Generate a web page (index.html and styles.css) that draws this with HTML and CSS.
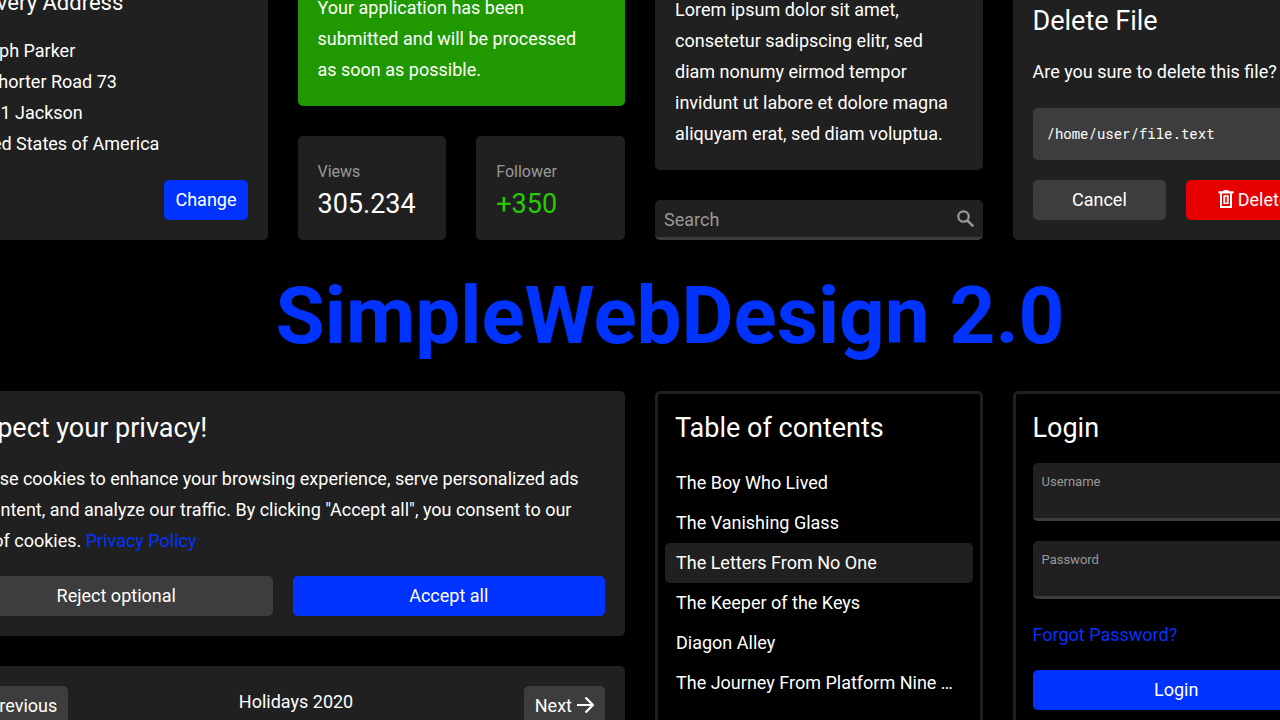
FILE: index.html
```html
<!DOCTYPE html>
<html lang="en">
<head>
<meta charset="utf-8">
<meta name="viewport" content="width=device-width, initial-scale=1">
<title>SimpleWebDesign 2.0</title>
<link rel="stylesheet" href="styles.css">
</head>
<body>
<main class="showcase">
  <div class="board board-top">
    <section class="card">
      <h3 class="subheading">Delivery Address</h3>
      <address class="text">Joseph Parker<br>No Shorter Road 73<br>39201 Jackson<br>United States of America</address>
      <div class="actions-end"><button class="button primary" type="button">Change</button></div>
    </section>

    <div class="stack">
      <section class="card success">
        <p class="text">Your application has been<br>submitted and will be processed<br>as soon as possible.</p>
      </section>
      <div class="stats">
        <section class="card">
          <div class="stat-label">Views</div>
          <div class="stat-value">305.234</div>
        </section>
        <section class="card">
          <div class="stat-label">Follower</div>
          <div class="stat-value gain">+350</div>
        </section>
      </div>
    </div>

    <div class="stack">
      <section class="card">
        <p class="text">Lorem ipsum dolor sit amet, consetetur sadipscing elitr, sed diam nonumy eirmod tempor invidunt ut labore et dolore magna aliquyam erat, sed diam voluptua.</p>
      </section>
      <div class="search">
        <input class="search-input" type="search" placeholder="Search" aria-label="Search">
        <svg class="search-icon" viewBox="0 0 18 18" aria-hidden="true"><circle cx="6.5" cy="6.5" r="5.200" fill="none" stroke="currentColor" stroke-width="2.200"/><path d="M10.300 10.300 16.300 16.300" fill="none" stroke="currentColor" stroke-width="2.600"/></svg>
      </div>
    </div>

    <section class="card">
      <h2 class="heading">Delete File</h2>
      <p class="text">Are you sure to delete this file?</p>
      <code class="path">/home/user/file.text</code>
      <div class="actions">
        <button class="button" type="button">Cancel</button>
        <button class="button danger" type="button"><svg class="trash" viewBox="0 0 16 18" aria-hidden="true"><path fill="currentColor" fill-rule="evenodd" d="M5.500 0h5v1.300h5v2.200H14V18H2V3.500H.5V1.300h5zM4 3.500V16h8V3.500z"/><path fill="currentColor" fill-rule="evenodd" d="M5.300 5.300h5.400V14H5.300zM7.200 6.700v6h1.600v-6z"/></svg>Delete</button>
      </div>
    </section>
  </div>

  <h1 class="title">SimpleWebDesign 2.0</h1>

  <div class="board board-bottom">
    <div class="stack wide">
      <section class="card">
        <h2 class="heading">respect your privacy!</h2>
        <p class="text">We use cookies to enhance your browsing experience, serve personalized ads<br>or content, and analyze our traffic. By clicking "Accept all", you consent to our<br>use of cookies. <a class="link" href="#privacy">Privacy Policy</a></p>
        <div class="actions">
          <button class="button" type="button">Reject optional</button>
          <button class="button primary" type="button">Accept all</button>
        </div>
      </section>
      <section class="card pager">
        <button class="button back" type="button"><svg class="arrow" viewBox="0 0 18 18" aria-hidden="true"><path d="M17 9H1.500M8.500 1.500 1 9 8.500 16.500" fill="none" stroke="currentColor" stroke-width="2.200"/></svg>Previous</button>
        <span class="text">Holidays 2020</span>
        <button class="button" type="button">Next<svg class="arrow" viewBox="0 0 18 18" aria-hidden="true"><path d="M1 9H16.500M9.500 1.500 17 9 9.500 16.500" fill="none" stroke="currentColor" stroke-width="2.200"/></svg></button>
      </section>
    </div>

    <nav class="card outline" aria-label="Table of contents">
      <h2 class="heading">Table of contents</h2>
      <ul class="toc">
        <li><a class="toc-link" href="#1">The Boy Who Lived</a></li>
        <li><a class="toc-link" href="#2">The Vanishing Glass</a></li>
        <li><a class="toc-link active" href="#3">The Letters From No One</a></li>
        <li><a class="toc-link" href="#4">The Keeper of the Keys</a></li>
        <li><a class="toc-link" href="#5">Diagon Alley</a></li>
        <li><a class="toc-link" href="#6">The Journey From Platform Nine and Three-Quarters</a></li>
      </ul>
    </nav>

    <form class="card outline">
      <h2 class="heading">Login</h2>
      <div class="field"><label class="field-label" for="username">Username</label><input class="field-input" id="username" type="text"></div>
      <div class="field"><label class="field-label" for="password">Password</label><input class="field-input" id="password" type="password"></div>
      <p class="text"><a class="link" href="#forgot">Forgot Password?</a></p>
      <button class="button primary" type="button">Login</button>
    </form>
  </div>
</main>
</body>
</html>
```
FILE: styles.css
```css
* {
  box-sizing: border-box;
}

body {
  margin: 0;
  background: #000;
  color: #fff;
  font-family: Roboto, "Liberation Sans", sans-serif;
  font-size: 18px;
  line-height: 31px;
}

.showcase {
  height: 100vh;
  overflow: hidden;
}

/* The board bleeds over both window edges. */
.board {
  display: grid;
  grid-template-columns: repeat(4, minmax(0, 1fr));
  gap: 30px;
  margin: 0 -60px;
}

.board-top {
  height: 240px;
  grid-template-rows: 240px;
  align-items: end;
}

.board-top .text {
  padding-bottom: 1px;
}

.board-bottom {
  min-height: 360px;
}

.stack {
  display: flex;
  flex-direction: column;
  gap: 30px;
}

.wide {
  grid-column: span 2;
}

.card {
  display: flex;
  flex-direction: column;
  gap: 20px;
  padding: 20px;
  border-radius: 5px;
  background: #202020;
}

.success {
  background: #209900;
}

.outline {
  padding: 17px;
  border: 3px solid #202020;
  background: #000;
}

.heading {
  margin: 0 0 -2px;
  font-size: 27px;
  font-weight: 400;
  line-height: 34px;
}

.subheading {
  margin: 0;
  font-size: 22px;
  font-weight: 400;
  line-height: 24px;
}

.text {
  margin: 0;
  font-style: normal;
}

.link {
  color: #0033ff;
  text-decoration: none;
}

.button {
  display: flex;
  align-items: center;
  justify-content: center;
  gap: 4px;
  height: 40px;
  padding: 0 11px 2px;
  border: 0;
  border-radius: 5px;
  background: #3d3d3d;
  color: #fff;
  font: inherit;
}

.back {
  padding-left: 6px;
}

.primary {
  background: #0033ff;
}

.danger {
  background: #e60000;
}

.actions {
  display: grid;
  grid-template-columns: 1fr 1fr;
  gap: 20px;
}

.actions-end {
  display: flex;
  justify-content: flex-end;
}

.stats {
  display: grid;
  grid-template-columns: 1fr 1fr;
  gap: 30px;
}

.stats .card {
  gap: 0;
}

.stat-label {
  color: #999;
  font-size: 16px;
}

.stat-value {
  margin-bottom: -2px;
  font-size: 27px;
  line-height: 35px;
}

.gain {
  color: #26cc00;
}

.search {
  display: flex;
  align-items: center;
  height: 40px;
  padding: 0 8px 0 9px;
  border-bottom: 3px solid #3d3d3d;
  border-radius: 5px;
  background: #202020;
  color: #999;
}

.search-input {
  flex: 1;
  min-width: 0;
  padding: 2px 0 0;
  border: 0;
  outline: 0;
  background: none;
  color: #fff;
  font: inherit;
}

.search-input::placeholder {
  color: #999;
  opacity: 1;
}

.search-icon,
.arrow {
  width: 18px;
  height: 18px;
}

.trash {
  width: 16px;
  height: 18px;
}

.path {
  padding: 10px 14px;
  border-radius: 5px;
  background: #3d3d3d;
  font-family: "Roboto Mono", "DejaVu Sans Mono", monospace;
  font-size: 14px;
  line-height: 32px;
}

.title {
  margin: 0;
  padding: 31px 0 29px 60px;
  color: #0033ff;
  font-size: 80px;
  font-weight: 700;
  line-height: 91px;
  text-align: center;
  white-space: nowrap;
}

.pager {
  flex-direction: row;
  align-items: flex-start;
  justify-content: space-between;
  min-height: 100px;
}

.toc {
  margin: 0 -10px;
  padding: 0;
  list-style: none;
}

.toc-link {
  display: block;
  overflow: hidden;
  padding: 0 11px;
  border-radius: 5px;
  color: #fff;
  line-height: 40px;
  text-decoration: none;
  text-overflow: ellipsis;
  white-space: nowrap;
}

.active {
  background: #202020;
}

.field {
  display: flex;
  flex-direction: column;
  height: 58px;
  padding: 8px 9px 0;
  border-bottom: 3px solid #3d3d3d;
  border-radius: 5px;
  background: #202020;
}

.field-label {
  color: #999;
  font-size: 13px;
  line-height: 21px;
}

.field-input {
  height: 24px;
  padding: 0;
  border: 0;
  outline: 0;
  background: none;
  color: #fff;
  font: inherit;
}
```
